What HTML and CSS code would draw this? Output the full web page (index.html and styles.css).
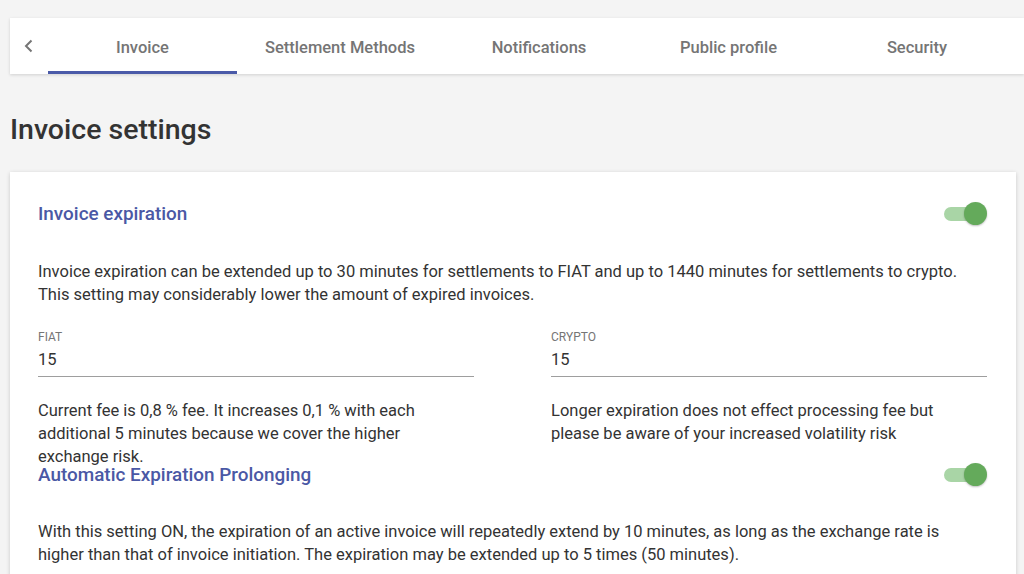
FILE: index.html
```html
<!DOCTYPE html>
<html lang="en">
<head>
    <meta charset="UTF-8">
    <meta name="viewport" content="width=device-width, initial-scale=1.0">
    <title>Invoice settings</title>
    <link rel="stylesheet" href="styles.css">
</head>
<body>
    <div class="tabs">
        <button class="tab-back" aria-label="Back">
            <svg width="12" height="14" viewBox="0 0 12 14"><path d="M8.5 1.5 L3 7 L8.5 12.5" fill="none" stroke="#757575" stroke-width="2"/></svg>
        </button>
        <div class="tab tab-invoice active">Invoice</div>
        <div class="tab tab-settlement">Settlement Methods</div>
        <div class="tab tab-notifications">Notifications</div>
        <div class="tab tab-profile">Public profile</div>
        <div class="tab tab-security">Security</div>
    </div>

    <h1>Invoice settings</h1>

    <div class="card">
        <div class="section-head">
            <h2>Invoice expiration</h2>
            <span class="switch on"><span class="thumb"></span></span>
        </div>
        <p class="desc">Invoice expiration can be extended up to 30 minutes for settlements to FIAT and up to 1440 minutes for settlements to crypto. This setting may considerably lower the amount of expired invoices.</p>

        <div class="fields">
            <div class="field">
                <label>FIAT</label>
                <div class="value">15</div>
                <p class="help">Current fee is 0,8 % fee. It increases 0,1 % with each additional 5 minutes because we cover the higher exchange risk.</p>
            </div>
            <div class="field">
                <label>CRYPTO</label>
                <div class="value">15</div>
                <p class="help">Longer expiration does not effect processing fee but please be aware of your increased volatility risk</p>
            </div>
        </div>

        <div class="section-head second">
            <h2>Automatic Expiration Prolonging</h2>
            <span class="switch on"><span class="thumb"></span></span>
        </div>
        <p class="desc last">With this setting ON, the expiration of an active invoice will repeatedly extend by 10 minutes, as long as the exchange rate is higher than that of invoice initiation. The expiration may be extended up to 5 times (50 minutes).</p>
    </div>
</body>
</html>
```

FILE: styles.css
```css
body {
    font-family: Roboto, "Liberation Sans", Arial, sans-serif;
    margin: 0;
    padding: 18px 0 0 10px;
    background: #f4f4f4;
    color: #333;
    overflow: hidden;
}
.tabs {
    display: flex;
    align-items: stretch;
    height: 56px;
    background: white;
    box-shadow: 0 1px 3px rgba(0,0,0,0.15);
}
.tab-back {
    width: 38px;
    border: none;
    background: none;
    padding: 0 0 0 13px;
    display: flex;
    align-items: center;
    cursor: pointer;
}
.tab {
    display: flex;
    align-items: center;
    justify-content: center;
    font-size: 16.5px;
    font-weight: 500;
    color: #757575;
    border-bottom: 3px solid transparent;
    padding-top: 5px;
    box-sizing: border-box;
}
.tab.active {
    border-bottom-color: #4a5aa8;
}
.tab-invoice { width: 189px; }
.tab-settlement { width: 206px; }
.tab-notifications { width: 192px; }
.tab-profile { width: 187px; }
.tab-security { width: 190px; }
h1 {
    font-size: 28.5px;
    font-weight: 500;
    color: #333;
    margin: 38px 0 0;
    line-height: 36px;
}
.card {
    margin-top: 24px;
    width: 1006px;
    box-sizing: border-box;
    background: white;
    padding: 30px 29px 40px 28px;
    box-shadow: 0 1px 4px rgba(0,0,0,0.18);
}
.section-head {
    display: flex;
    justify-content: space-between;
    align-items: center;
    height: 24px;
}
.section-head.second {
    margin-top: 18px;
}
h2 {
    margin: 0;
    font-size: 18.9px;
    font-weight: 500;
    color: #4a58a5;
    line-height: 24px;
}
.switch {
    position: relative;
    display: block;
    width: 43px;
    height: 24px;
}
.switch::before {
    content: "";
    position: absolute;
    left: 0;
    top: 5px;
    width: 38px;
    height: 14px;
    border-radius: 7px;
    background: #a9d5a6;
}
.thumb {
    position: absolute;
    right: 0;
    top: 0;
    width: 23px;
    height: 23px;
    border-radius: 50%;
    background: #64aa5b;
    box-shadow: 0 1px 2px rgba(0,0,0,0.25);
}
.desc {
    margin: 34px 0 0;
    font-size: 16.5px;
    line-height: 23px;
    color: #333;
}
.desc.last {
    margin-top: 33px;
}
.fields {
    display: grid;
    grid-template-columns: 436px 436px;
    column-gap: 77px;
    margin-top: 23px;
}
.field label {
    display: block;
    font-size: 12px;
    line-height: 16px;
    color: #757575;
    text-transform: uppercase;
}
.value {
    margin-top: 3px;
    font-size: 16.5px;
    line-height: 24px;
    color: #333;
    padding-bottom: 4px;
    border-bottom: 1px solid #9e9e9e;
}
.help {
    margin: 22px 0 0;
    padding-right: 24px;
    height: 46px;
    font-size: 16.5px;
    line-height: 23px;
    color: #333;
}
```
